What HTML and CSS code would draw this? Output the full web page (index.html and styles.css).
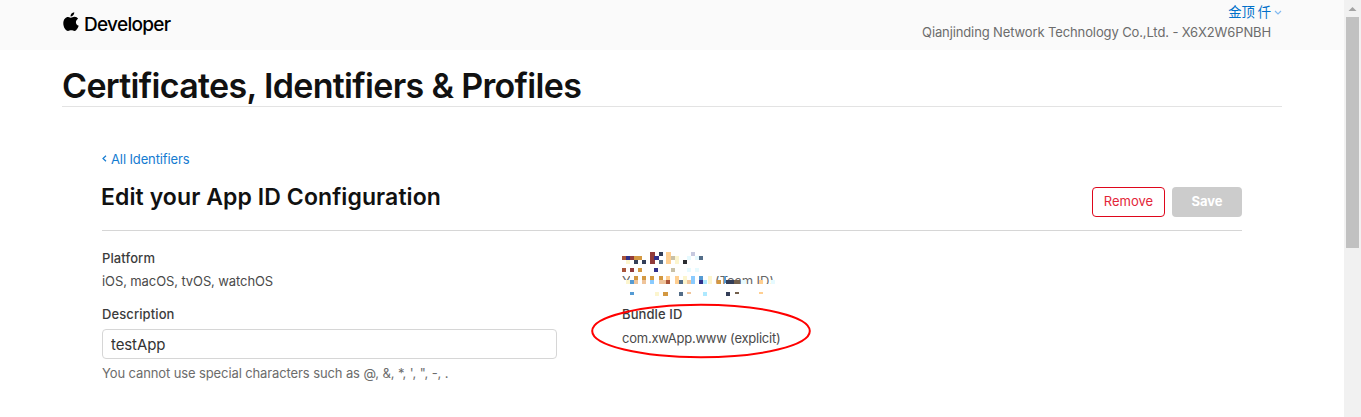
FILE: index.html
```html
<!DOCTYPE html>
<html lang="en">
<head>
<meta charset="utf-8">
<title>Certificates, Identifiers &amp; Profiles</title>
<link rel="stylesheet" href="styles.css">
</head>
<body>
<div class="page">
  <header class="topbar">
    <a class="brand">
      <svg class="apple" viewBox="0 0 16 20" width="16" height="20"><path d="M11.3 0.3C11.4 2.8 9.5 4.6 7.5 4.6C7.3 2.3 9.2 0.5 11.3 0.3ZM8 5.8C8.8 5.8 9.8 4.8 11.6 4.8C13.2 4.8 14.4 5.6 15.1 6.7C12 8.5 12.3 12.5 15.7 13.8C15 15.8 13.4 19 11.6 19C10.3 19 9.7 18.3 8.3 18.3C6.8 18.3 6.2 19 5 19C2.7 19 .3 15 .3 11.2C.3 7.2 2.7 4.9 5.1 4.9C6.5 4.9 7.4 5.8 8 5.8Z"/></svg>
      <span class="brand-name">Developer</span>
    </a>
    <div class="account">
      <div class="user"><span class="user-name">金顶 仟</span><svg class="chevron" width="8" height="5" viewBox="0 0 8 5"><path d="M1 1 4 4 7 1"/></svg></div>
      <div class="team">Qianjinding Network Technology Co.,Ltd. - X6X2W6PNBH</div>
    </div>
  </header>
  <main>
    <h1 class="title"><span>Certificates, Identifiers &amp; Profiles</span></h1>
    <section class="content">
      <a class="back"><svg width="5" height="7" viewBox="0 0 5 7"><path d="M4 .7 1 3.5 4 6.3"/></svg><span>All Identifiers</span></a>
      <div class="heading">
        <h2><span>Edit your App ID Configuration</span></h2>
        <div class="actions"><button class="btn remove">Remove</button><button class="btn save">Save</button></div>
      </div>
      <div class="details">
        <div class="col">
          <div class="label platform">Platform</div>
          <div class="value systems">iOS, macOS, tvOS, watchOS</div>
          <div class="label desc">Description</div>
          <input class="field" type="text" value="testApp">
          <div class="hint">You cannot use special characters such as @, &amp;, *, ', ", -, .</div>
        </div>
        <div class="col second">
          <svg class="mosaic" width="160" height="48" viewBox="0 0 160 48" shape-rendering="crispEdges">
            <clipPath id="strip"><path d="M0 28h8v4H0zM90 28h64v8H90z"/></clipPath>
            <g class="letters" clip-path="url(#strip)"><text x="0" y="38">Y</text><text x="93" y="38" textLength="59">(Team ID)</text></g>
            <path fill="#913b3b" d="M28 4h5v12h-5zM8 8h4v4H8zM8 20h4v4H8z"/>
            <path fill="#a95439" d="M0 8h4v4H0zM0 20h4v4H0zM44 32h4v4h-4z"/>
            <path fill="#30308a" d="M4 8h4v4H4zM32 8h5v4h-5zM32 20h4v4h-4zM77 32h4v4h-4z"/>
            <path fill="#d39841" d="M12 8h8v4h-8zM16 20h4v4h-4zM12 28h4v4h-4zM20 28h4v4h-4zM28 28h4v4h-4zM37 28h4v4h-4zM41 44h5v4h-5zM95 32h4v4h-4z"/>
            <path fill="#333e58" d="M12 12h4v4h-4zM20 12h4v4h-4zM37 4h4v4h-4zM104 32h8v4h-8zM104 44h4v4h-4z"/>
            <path fill="#536d88" d="M37 12h4v4h-4zM57 32h4v4h-4zM57 44h4v4h-4zM77 8h4v4h-4z"/>
            <path fill="#ffcf91" d="M44 4h5v12h-5zM44 28h4v4h-4zM53 28h4v8h-4zM137 32h4v4h-4zM137 44h4v2h-4z"/>
            <path fill="#efc49a" d="M12 32h4v4h-4zM20 32h4v4h-4zM37 32h7v4h-7zM65 32h4v4h-4zM65 44h4v2h-4z"/>
            <path fill="#fcf5ce" d="M4 12h4v4H4zM53 8h4v8h-4zM4 32h4v4H4zM61 28h4v8h-4zM86 28h4v8h-4zM33 44h4v4h-4z"/>
            <path fill="#2b2c30" d="M61 12h4v4h-4z"/>
            <path fill="#c8c0a7" d="M49 8h4v4h-4zM49 20h4v4h-4z"/>
            <path fill="#c6c9df" d="M69 4h4v4h-4z"/>
            <path fill="#e6faff" d="M65 8h4v4h-4zM73 8h4v4h-4zM65 20h4v4h-4zM73 20h4v4h-4zM120 32h4v4h-4zM149 32h4v4h-4z"/>
            <path fill="#8acbff" d="M28 32h4v4h-4zM69 28h4v8h-4z"/>
            <path fill="#559bd4" d="M8 32h4v4H8zM77 28h4v4h-4zM102 28h2v7h-2zM8 44h4v3H8z"/>
            <path fill="#aee9ff" d="M81 32h4v4h-4zM81 44h4v4h-4z"/>
            <path fill="#73604c" d="M112 32h6v4h-6zM113 44h4v2h-4z"/>
          </svg>
          <div class="label bundle">Bundle ID</div>
          <div class="value bundle-value">com.xwApp.www (explicit)</div>
          <svg class="ring" width="222" height="58" viewBox="0 0 222 58"><ellipse cx="111" cy="29" rx="108.8" ry="26.2"/></svg>
        </div>
      </div>
    </section>
  </main>
</div>
<aside class="scrollbar"><svg class="up" width="17" height="17" viewBox="0 0 17 17"><path d="M4.5 11 8.5 7l4 4Z"/></svg><div class="thumb"></div></aside>
</body>
</html>
```
FILE: styles.css
```css
* { box-sizing: border-box; }
body { margin: 0; height: 417px; display: flex; overflow: hidden; background: #fff; color: #4a4a4a; font-family: Inter, "Noto Sans CJK SC", sans-serif; font-size: 13px; line-height: 20px; }
.page { width: 1344px; }
.topbar { height: 50px; padding: 0 62px; background: #fafafa; display: flex; justify-content: space-between; }
.brand { display: flex; padding-top: 12px; color: #000; }
.apple { margin-left: 1px; margin-right: 5px; }
.brand-name { padding-top: 1px; font-size: 19px; line-height: 24px; font-weight: 500; letter-spacing: -.7px; }
.account { text-align: right; padding-top: 2px; }
.user { display: flex; justify-content: flex-end; align-items: center; height: 20px; color: #0070c9; }
.user-name { font-family: "Noto Sans CJK SC", sans-serif; font-size: 13.3px; }
.chevron { margin-left: 3px; fill: none; stroke: #83baf0; stroke-width: 1.2; }
.team { padding-right: 11px; color: #6c6c6c; letter-spacing: -.12px; }
h1, h2 { margin: 0; color: #111; }
.title { margin: 0 62px; height: 57px; padding-top: 15px; border-bottom: 1px solid #e3e3e3; font-size: 34px; line-height: 41px; font-weight: 600; letter-spacing: -.67px; white-space: nowrap; }
.content { margin: 41px 102px 0; }
.back { display: flex; align-items: center; height: 21px; gap: 4px; color: #147bd1; letter-spacing: -.12px; }
.back svg { fill: none; stroke: #147bd1; stroke-width: 1.2; }
.heading { display: flex; justify-content: space-between; height: 62px; border-bottom: 1px solid #d6d6d6; }
h2 { margin-left: -1px; padding-top: 13px; font-size: 23px; line-height: 30px; font-weight: 600; letter-spacing: .09px; white-space: nowrap; }
.actions { display: flex; gap: 7px; padding-top: 18px; }
.btn { height: 30px; padding: 0 0 3px; font: 13px/20px Inter, sans-serif; border-radius: 4px; }
.remove { width: 73px; color: #e32639; background: #fff; border: 1px solid #de071c; }
.save { width: 70px; padding-bottom: 3px; background: #ccc; color: #fff; border: 0; font-weight: 700; }
.details { display: flex; padding-top: 17px; }
.col { width: 520px; }
.label { font-weight: 500; color: #3c3c3c; letter-spacing: .1px; }
.systems { margin-top: 3px; letter-spacing: -.1px; }
.desc { margin-top: 13px; }
.field { display: block; width: 455px; height: 30px; margin-top: 5px; padding: 0 8px; border: 1px solid #d6d6d6; border-radius: 4px; background: #fff; color: #333; font: 15px Inter, sans-serif; letter-spacing: -.1px; }
.hint { margin-top: 4px; color: #6c6c6c; letter-spacing: -.11px; white-space: nowrap; }
.second { position: relative; }
.mosaic { display: block; height: 48px; }
.letters { font-size: 13px; fill: #666; }
.bundle { margin-top: 8px; }
.bundle-value { margin-top: 4px; letter-spacing: -.24px; }
.ring { position: absolute; left: -32px; top: 54px; fill: none; stroke: #f00; stroke-width: 2; }
.scrollbar { width: 17px; background: #f1f1f1; }
.up { display: block; fill: #a3a3a3; }
.thumb { width: 13px; height: 231px; margin-left: 2px; background: #c1c1c1; }
```
